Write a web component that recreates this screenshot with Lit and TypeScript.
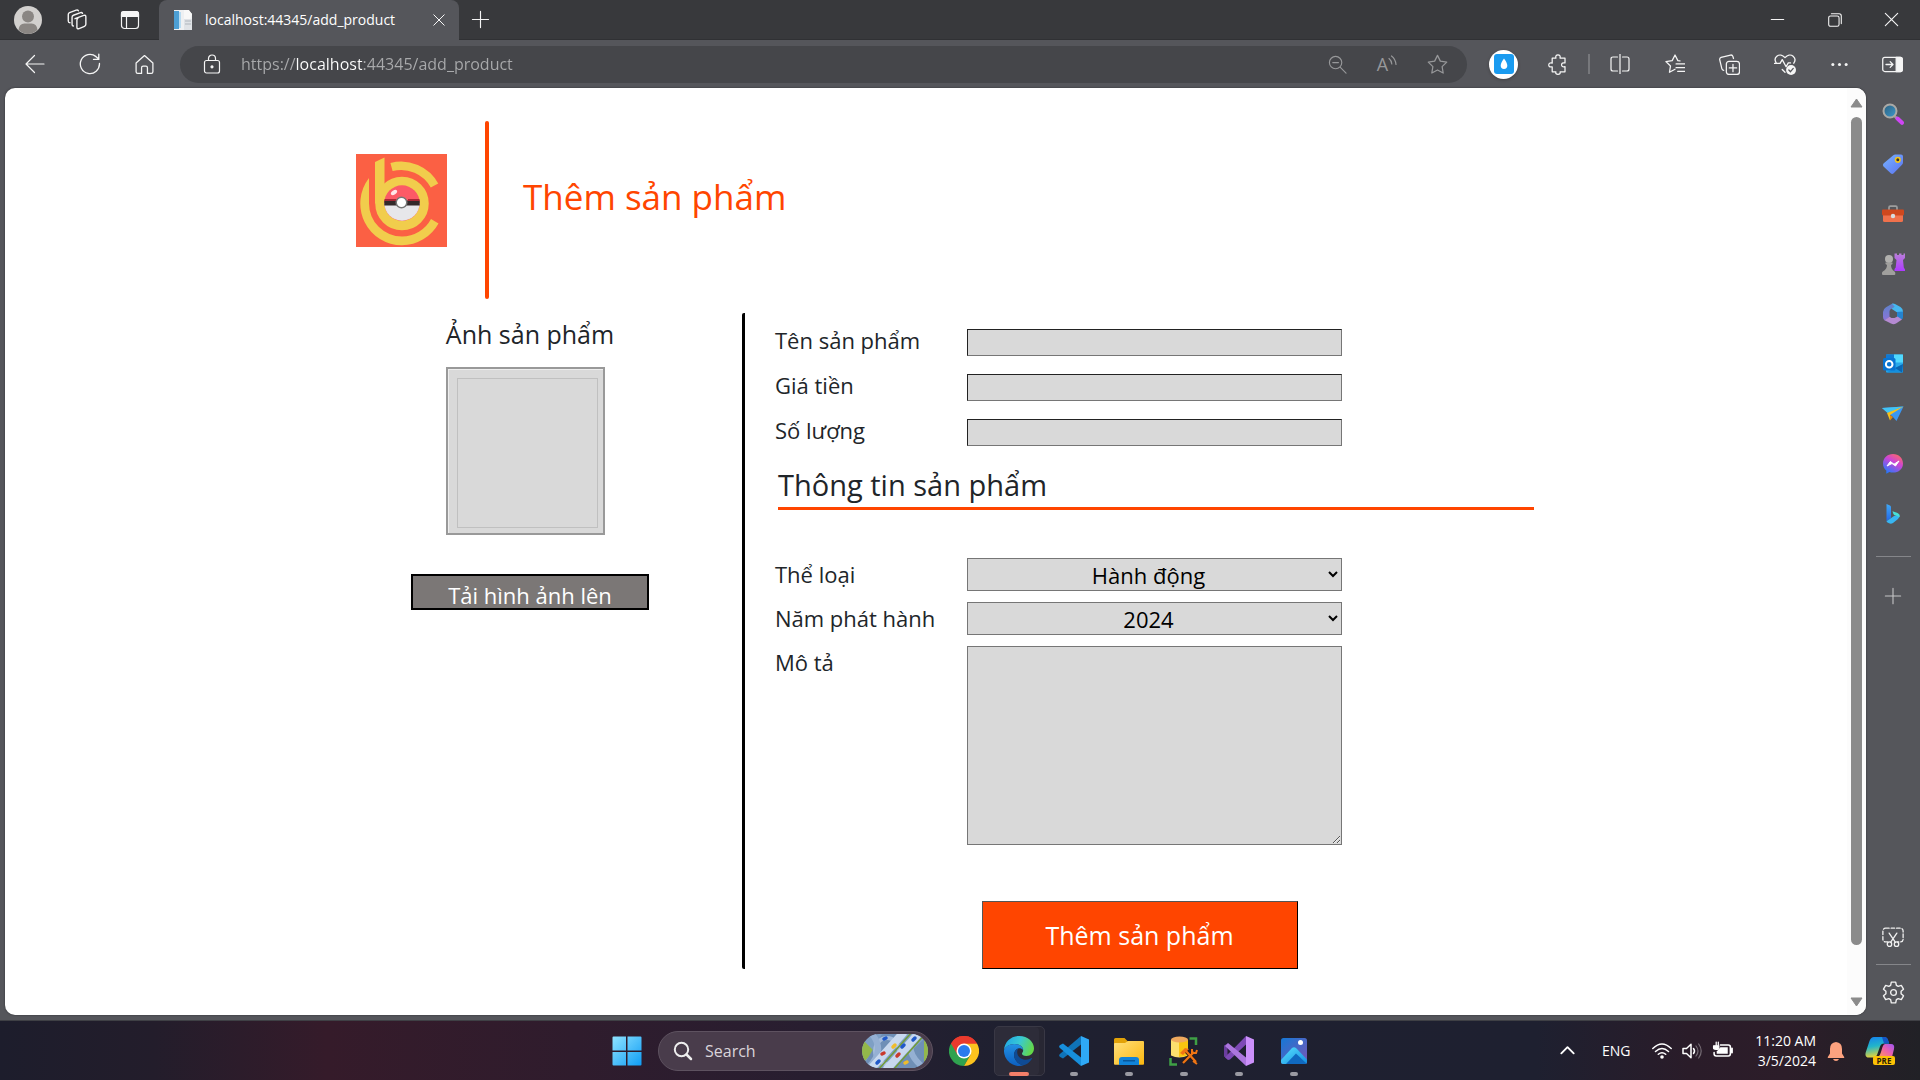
import { LitElement, html, css, svg } from "lit";
import { customElement, property } from "lit/decorators.js";

const line = (size: number, body: unknown) => html`
  <svg class="line" width=${size} height=${size} viewBox="0 0 20 20" aria-hidden="true">${body}</svg>`;
const art = (w: number, h: number, body: unknown) => html`
  <svg width=${w} height=${h} viewBox="0 0 ${w} ${h}" aria-hidden="true">${body}</svg>`;

const glyph = {
  workspaces: svg`<path d="M7 9.3 14.6 6.4q1.8-.5 1.8 1.2v6.6q0 1.2-1.2 1.7l-4.7 2q-1.9.6-1.9-1.2v-6.2q0-1 .9-1.4M5.6 15.6q-1.2 0-1.2-1.3V8q0-1.2 1.2-1.7L11.8 4q1.2-.3 1.7.6M2.6 12.8q-1.5 0-1.5-1.4V5.6q0-1.2 1.1-1.6L8 1.8q1.4-.4 1.9.6"/>`,
  tabs: svg`<rect x="1.5" y="1.5" width="17" height="17" rx="3"/><path d="M1.5 3.5q0-2 2-2h13q2 0 2 2v3h-17z" fill="currentColor"/><path d="M6.5 6v12.500"/>`,
  back: svg`<path d="M19 10H1.500M9.500 1.500 1 10l8.500 8.500"/>`,
  refresh: svg`<path d="M18.600 9.500A8.700 8.700 0 1 1 15.500 3.300L18 5.500M18 1v4.800h-4.800"/>`,
  home: svg`<path d="M2 8.600 10 1.500l8 7.100v8.400q0 1.500-1.500 1.500h-3.700v-5.500q0-1.500-1.500-1.500H8.700q-1.500 0-1.500 1.500v5.500H3.500Q2 18.500 2 17z"/>`,
  lock: svg`<rect x="2.500" y="6.500" width="15" height="12.500" rx="2"/><path d="M6.500 6.500V4.500a3.500 3.500 0 0 1 7 0v2"/><circle cx="10" cy="12.800" r="1" fill="currentColor"/>`,
  zoomOut: svg`<circle cx="8" cy="8" r="6.500"/><path d="M5 8h6M13 13l6 6"/>`,
  star: svg`<path d="m10 1.300 2.700 5.500 6.100.9-4.400 4.300 1 6.100-5.400-2.900-5.400 2.900 1-6.100L1.200 7.700l6.100-.9z"/>`,
  puzzle: svg`<path d="M4 4h3.500C7 1.500 8 .8 9.500.8S12 1.500 11.500 4h4.700v4.500c-2.300-.5-3.300.4-3.300 1.800s1 2.300 3.300 1.800V17h-4.700c.5 1.600-.5 2.300-2 2.300S7 18.600 7.500 17H4v-4.800c-2.400.5-3.300-.4-3.300-1.800s1-2.300 3.300-1.800z"/>`,
  split: svg`<path d="M7.500 3H3Q1 3 1 5v10q0 2 2 2h4.500M10 0v20M12.500 3H17q2 0 2 2v10q0 2-2 2h-4.500"/>`,
  favorites: svg`<path d="m10.500 14.500-5.300 2.900 1-6-4.400-4.200 6-.9 2.700-5.400 2.700 5.400 2 .3M11.500 9.500H20M11.500 13H20M13 16.500h7"/>`,
  collections: svg`<rect x="7" y="7" width="12.500" height="12.500" rx="2.500"/><path d="M13.300 9.800v7M9.800 13.300h7M4.500 15.500q-1.500-.2-1.800-1.600L.7 5.500Q.4 3.700 2 3.200L11 1q1.700-.3 2.200 1.300l.6 2"/>`,
  heart: svg`<path d="M10 17.500 7.500 15M2 9C.6 6.800.8 4.400 2.600 2.900c2.200-1.800 5.200-1.200 7.400 1.300 2.200-2.500 5.200-3.100 7.400-1.300 1.900 1.600 2 4.300.6 6.400M.5 9.500h5l2-3.500 3.500 6.500 2-3.500h2"/><circle cx="15.500" cy="15.500" r="4.500" fill="currentColor" stroke="none"/><path d="m13.500 15.500 1.500 1.500 2.500-3" stroke="#55565b"/>`,
  dots: svg`<g fill="currentColor" stroke="none"><circle cx="3" cy="10" r="1.600"/><circle cx="10" cy="10" r="1.600"/><circle cx="17" cy="10" r="1.600"/></g>`,
  panel: svg`<rect x=".7" y="3.300" width="18.600" height="13.400" rx="2"/><path d="M13.500 3.300h4q1.800 0 1.800 2v9.400q0 2-1.800 2h-4z" fill="currentColor"/><path d="M3.800 10h6.400M7.800 7.300l2.700 2.700-2.700 2.700"/>`,
  plus: svg`<path d="M10 1.500v17M1.500 10h17"/>`,
  close: svg`<path d="m3.500 3.500 13 13M16.500 3.500l-13 13"/>`,
  minimize: svg`<path d="M3.500 10h13"/>`,
  restore: svg`<rect x="3" y="5.500" width="11.500" height="11.500" rx="2"/><path d="M6 3h8.500q2.500 0 2.500 2.500V14"/>`,
  snip: svg`<rect x=".8" y="2" width="18.400" height="12.500" rx="2.500" stroke-dasharray="3.200 1.800"/><path d="M6.500 6.500 12 15M13.500 6.500 8 15" stroke="#55565b" stroke-width="4"/><path d="m6.500 6.500 5.700 8.300M13.500 6.500l-5.700 8.300"/><circle cx="6.800" cy="16.500" r="2"/><circle cx="13.200" cy="16.500" r="2"/>`,
  gear: svg`<path d="M8.100 1h3.800l.6 2.800 1.600.9 2.700-.9 1.900 3.300-2.100 1.900v2l2.100 1.900-1.900 3.300-2.700-.9-1.600.9-.6 2.800H8.100l-.6-2.800-1.600-.9-2.700.9-1.900-3.300L3.400 11V9L1.300 7.100l1.900-3.300 2.700.9 1.600-.9z"/><circle cx="10" cy="10" r="2.500"/>`,
  chevron: svg`<path d="m3.500 13 6.500-6.500 6.500 6.500" stroke-width="2"/>`,
  wifi: svg`<g stroke-width="1.500"><path d="M.8 7.500Q10-1.500 19.200 7.500M3.500 10.500q6.500-6 13 0M6.300 13.300q3.700-3.200 7.400 0"/></g><circle cx="10" cy="16" r="1.800" fill="currentColor" stroke="none"/>`,
  speaker: svg`<path d="M1 7.500h3.500L9 3.300v13.400L4.500 12.500H1z" stroke-width="1.500"/><path d="M11.500 7.500q2 2.500 0 5" stroke-width="1.500"/><path d="M14 5q4 5 0 10M16.700 3q5 7 0 14" opacity=".35"/>`,
  battery: svg`<path d="M8 4.800h7.500q2 0 2 2v6.400q0 2-2 2H4q-2 0-2-2V12" stroke-width="1.500"/><path d="M8 7h7v6H4.500v-2z" fill="currentColor" stroke="none"/><path d="M19 8v4" stroke-width="1.800"/><path d="M4 2v4M1.500 5.500h5v2Q6.500 9 4 9T1.500 7.500zM6 2v3" fill="currentColor"/>`,
};

const magnifier = art(22, 22, svg`
  <defs><linearGradient id="mg" x1="0" y1="0" x2="1" y2="1"><stop stop-color="#2c5e7c"/><stop offset="1" stop-color="#3d9bd0"/></linearGradient></defs>
  <path d="m12.500 13 3 3" stroke="#9b9b9b" stroke-width="2.500"/><path d="m15.500 15.500 4.500 4.300" stroke="#cf45f5" stroke-width="4" stroke-linecap="round"/>
  <circle cx="8" cy="8" r="6.500" fill="url(#mg)" stroke="#aaa9a6" stroke-width="2"/>`);
const tag = art(22, 22, svg`
  <defs><linearGradient id="tg" x1="0" y1="0" x2="1" y2="1"><stop stop-color="#78b4ff"/><stop offset="1" stop-color="#5b72f0"/></linearGradient></defs>
  <path d="M11 2.500q1-1 2.500-1H19q2 0 2 2v6q0 1.300-1 2.300l-8.300 8.500q-1.500 1.300-3 0L1.500 13.500q-1.300-1.500 0-3z" fill="url(#tg)"/>
  <circle cx="15.800" cy="6.800" r="2.300" fill="#333" stroke="#f4c41d" stroke-width="1.600"/>`);
const toolbox = art(24, 22, svg`
  <path d="M8 7V4.500q0-1.300 1.300-1.300h5.400Q16 3.200 16 4.500V7" fill="none" stroke="#9d9d9d" stroke-width="1.700"/>
  <path d="M2 11h20v6.500q0 1.500-1.500 1.500h-17Q2 19 2 17.500z" fill="#f0714c"/><path d="M2 6.500h20q1 0 1 1V11q0 1.500-1.500 1.500h-19Q1 12.500 1 11V7.500q0-1 1-1z" fill="#cf481e"/>
  <circle cx="12" cy="13" r="2.200" fill="#d8dde0"/>`);
const chess = art(24, 24, svg`
  <defs><linearGradient id="rk" x1="0" y1="0" x2="0" y2="1"><stop stop-color="#b87fd8"/><stop offset="1" stop-color="#ae3aff"/></linearGradient></defs>
  <path d="M13.500 1.500H16V3h2V1.500h2.500V3h2V1.500H24v4.500l-2 2 .8 7.500 1.200 2v1.500H13.500V17l1.200-1.500.8-7.500-2-2z" fill="url(#rk)"/>
  <circle cx="8" cy="7" r="4" fill="#b1b0ae"/><path d="M4.500 10.500h7V12l-1.500 1q0 4 3.500 6.500.8.500.8 1.500v1q0 1-1 1H2q-1 0-1-1v-1q0-1 .8-1.500Q6 17 6 13l-1.500-1z" fill="#a09f9d"/>`);
const office = art(22, 22, svg`
  <defs><linearGradient id="o1" x1="0" y1="0" x2="0" y2="1"><stop stop-color="#5c83c9"/><stop offset="1" stop-color="#8b74d8"/></linearGradient></defs>
  <path d="M10.500 0.500 4 4.200Q1 6 1 9v5q0 2 1.800 3.500L7.500 14V8.500q0-1.500 1.500-2.400L13.500 3z" fill="url(#o1)"/>
  <path d="M10 .8q1.500-.6 3 .2L18.500 4Q21 5.500 21 8.500v4L14.500 9 9.500 5.800 12.500 3.500z" fill="#46b7f0"/>
  <path d="M21 8.500V14q0 1.500-1.200 2.600L15 14V9z" fill="#2583cf"/>
  <path d="m2.500 17.200 5-3.500 2 1.300h3l3-1.500 4.500 3-6 4q-2.500 1.500-5 0z" fill="#b58ad2"/>`);
const outlook = art(22, 22, svg`
  <rect x="4" y="1.500" width="17" height="18" rx="1" fill="#28a8ea"/><path d="M12 1.500h9v8h-9z" fill="#50d9ff"/><path d="M4 1.500h8v8H4z" fill="#0f78d4"/>
  <path d="m4 19.500 17-8v7q0 1-1 1z" fill="#1490df"/><path d="m13 15 8-4-1 8.500z" fill="#0a65b1"/>
  <rect x="1" y="5" width="12.500" height="12.500" rx="1.500" fill="#0873d1"/><circle cx="7.200" cy="11.200" r="3.300" fill="none" stroke="#fff" stroke-width="2"/>`);
const plane = art(24, 22, svg`
  <path d="M1 5 22.500 3.500 15.500 18l-4-4.500z" fill="#3a97f3"/><path d="M1 5l21.500-1.500L6.500 10z" fill="#42c4f5"/>
  <path d="M6 10 22.500 3.500 9 12v5.500z" fill="#f8c21c"/><path d="m9 12 3 2-3 3.500z" fill="#e48a0c"/>`);
const messenger = art(22, 22, svg`
  <defs><linearGradient id="ms" x1=".8" y1="0" x2=".2" y2="1"><stop stop-color="#ff6a62"/><stop offset=".4" stop-color="#cc45d6"/><stop offset="1" stop-color="#1a7cff"/></linearGradient></defs>
  <path d="M11 1C5.300 1 1 5 1 10.500c0 3 1.300 5.400 3.300 7v3.200L7.400 19q1.700.6 3.600.6c5.700 0 10-3.800 10-9.200S16.700 1 11 1z" fill="url(#ms)"/>
  <path d="m5 13 3.300-4.500 3.700 2.700L17 8l-3.500 5-3.500-2.500z" fill="#fff" stroke="#fff" stroke-linejoin="round"/>`);
const bing = art(22, 22, svg`
  <defs><linearGradient id="bg1" x1="0" y1="0" x2="0" y2="1"><stop stop-color="#3fa9f5"/><stop offset="1" stop-color="#2466e8"/></linearGradient></defs>
  <path d="m4.500 1 3.500 1.500q1 .5 1 1.500v11l-4.500 3.300z" fill="url(#bg1)"/><path d="M4.500 18.300 12 13l5.500-1.500q.5 2.500-1.500 4.500l-5 4q-2 1.200-4 .3-2.500-1-2.500-2z" fill="#38b6f2"/>
  <path d="m10.500 8.300 4.500 1.500q3 1.200 2.600 4.500-1.500-1.300-4-1.800-1.800-.5-2.200-1.500z" fill="#48e0d5"/>`);

const windowsLogo = art(30, 30, svg`
  <defs><linearGradient id="wn" x1="0" y1="0" x2="1" y2="1"><stop stop-color="#8fe3ff"/><stop offset="1" stop-color="#0f9df5"/></linearGradient></defs>
  <path d="M1.500.5H14V14.500H.5v-13q0-1 1-1zM15.500.5h13q1 0 1 1V14.500h-14zM.5 16H14v13.500H1.500q-1 0-1-1zM15.500 16h14v12.500q0 1-1 1h-13z" fill="url(#wn)"/>`);
const chrome = art(30, 30, svg`
  <path d="M15 15 2 7.500A15 15 0 0 1 28 7.500z" fill="#ea3a2d"/><path d="M2 7.500A15 15 0 0 0 15 30l6.500-11.300L15 15z" fill="#2fa24f"/>
  <path d="M28 7.500A15 15 0 0 1 15 30l6.500-11.200L15 7.500z" fill="#fcc31e"/><path d="M2 7.500A15 15 0 0 1 28 7.500H15v7.500l-6.500 3.700z" fill="#ea3a2d"/>
  <circle cx="15" cy="15" r="7.500" fill="#fff"/><circle cx="15" cy="15" r="6" fill="#2a7bee"/>`);
const edge = art(30, 30, svg`
  <defs>
    <linearGradient id="e1" x1="0" y1=".2" x2="1" y2=".5"><stop stop-color="#1fa5e6"/><stop offset=".5" stop-color="#38c8d4"/><stop offset="1" stop-color="#64d848"/></linearGradient>
    <linearGradient id="e2" x1="0" y1="0" x2="0" y2="1"><stop stop-color="#2391e4"/><stop offset="1" stop-color="#0c5fc0"/></linearGradient>
  </defs>
  <path d="M0 14C.5 6 7 0 15.300 0 24 0 30 6 30 12.300c0 4.800-3.500 7.700-7.500 7.700-3.200 0-4.500-1.300-4.500-2.300 0-.8 1.200-1.500 1.200-3.700C19 10.500 15 8 10.500 8 5.500 8 1.500 10.800 0 14z" fill="url(#e1)"/>
  <path d="M0 14C1.500 10.800 5 8 10.500 8c4.600 0 8.300 2.600 8.700 6-1.500-1.600-3.500-2-5-1.500-4 1.500-5.200 6.500-3.200 10.500 1.700 3.500 5 5.800 8.500 6.200A15 15 0 0 1 0 14z" fill="url(#e2)"/>
  <path d="M14.200 12.500C12 16 13.500 20.500 17 22.500c4 2.200 8 1.200 10-.2.800-.5 1.300 0 .8.800-2 3.400-5.300 5.600-8.300 6.100-5-.7-9.500-5-9.500-10.200 0-3 1.700-5.500 4.200-6.500z" fill="#0f4b94"/>`);
const vscode = art(30, 30, svg`
  <path d="M22 0v8.500L4 22.500 1.200 21q-2-1.500-.3-3z" fill="#0f73b8"/>
  <path d="M22 30v-8.500L4 7.500 1.200 9q-2 1.500-.3 3z" fill="#178fdc"/><path d="M22 0 30 3.500v23L22 30z" fill="#2fa9f6"/>`);
const folder = art(30, 30, svg`
  <defs><linearGradient id="fd" x1="0" y1="0" x2="1" y2="1"><stop stop-color="#ffe07c"/><stop offset="1" stop-color="#fbb70f"/></linearGradient></defs>
  <path d="M0 3.500Q0 2 1.500 2h9L14 5.500h14V12H0z" fill="#e2a208"/><path d="M0 8q0-1 1-1h10l3-2h15q1 0 1 1v22q0 .8-1 .8H1q-1 0-1-.8z" fill="url(#fd)"/>
  <path d="M5 29v-5q0-3 3-3h14q3 0 3 3v5z" fill="#1183d8"/><rect x="9" y="24" width="12" height="1.500" fill="#08579b"/>`);
const database = art(30, 30, svg`
  <path d="M2 4v15.500q8 4 17 0V4z" fill="#fbdf6e"/><path d="M10 4h9v15q-4.500 2-9 2z" fill="#f9c510"/><ellipse cx="10.500" cy="3.500" rx="8.500" ry="3" fill="#efa95e"/>
  <path d="M20.500 2.500h6.500V9M1.500 22v6.500H8" fill="none" stroke="#3fa045" stroke-width="2.500"/>
  <path d="m14 27 11-11M17 15l10 11" stroke="#2a1c1a" stroke-width="4"/><path d="m14 27 11-11M17 15l10 11" stroke="#ef7514" stroke-width="2.200"/>
  <path d="m11 17 5-5 4 1-6 6z" fill="#ef7514"/><path d="M23 13v4h4l1-3M28 28l-4-3" fill="none" stroke="#ef7514" stroke-width="2"/>`);
const studio = art(30, 30, svg`
  <path d="M0 9.500 4 7.500 7 12v6l-3 5-4-2.500z" fill="#6b3d9f"/><path d="M3.500 11.500v7L7.500 15z" fill="#231f30"/>
  <path d="M1 21.500 22 0v8.500L6 23.500l-2 .5z" fill="#7d49b5"/><path d="M4 7 22 21.500V30L1 10z" fill="#ac76de"/><path d="m22 0 8 3.500v23L22 30z" fill="#cb90fa"/>`);
const photos = art(26, 26, svg`
  <defs><linearGradient id="ph" x1="0" y1="0" x2="1" y2="1"><stop stop-color="#1478d6"/><stop offset="1" stop-color="#7b56b5"/></linearGradient>
  <linearGradient id="mt" x1="0" y1="0" x2="1" y2="1"><stop stop-color="#58e2ff"/><stop offset="1" stop-color="#158de0"/></linearGradient></defs>
  <rect width="26" height="26" rx="2.500" fill="url(#ph)"/><path d="M0 22 11 10q2-1.500 4 0l11 11.500V24q0 2-2 2H2q-2 0-2-2z" fill="url(#mt)"/><path d="m5 26 10-10.500 10.500 10q-.7.500-1.500.5z" fill="#1069c0"/><circle cx="19.500" cy="4.500" r="2.500" fill="#fff"/>`);
const roads = art(66, 34, svg`
  <defs><clipPath id="rc"><rect width="66" height="34" rx="17"/></clipPath></defs>
  <g clip-path="url(#rc)"><rect width="66" height="34" fill="#7e9fc4"/><path d="M0 5 12 17 0 30zM66 3 51 16l15 16z" fill="#93b84a"/>
  <path d="M20 0h17L10 34H0zM62 5 32 34h30z" fill="#6f8fb6"/>
  <g fill="none"><ellipse cx="25" cy="17" rx="12" ry="13" stroke="#a5bcdb" stroke-width="4"/><path d="M10 0q14 17-4 34M54 0q-14 17 8 34" stroke="#95b0d3" stroke-width="6"/>
  <path d="m8 36 34-38M24 36 58-2" stroke="#c8d8ee" stroke-width="8"/><path d="m16 36 34-38M31 36 65-2" stroke="#739c36" stroke-width="1.500"/></g>
  <g stroke-linecap="round" stroke-width="3.500"><path d="m22 5 2-1M51 6l2-2M40 13l2-2M15 29l2-2" stroke="#2159c9"/><path d="m20 20 2-1M35 22l2-2" stroke="#c93a2d"/><path d="m31 13 2-2M43 29l2-1" stroke="#f0bc2b"/></g></g>`);
const copilot = art(32, 30, svg`
  <defs>
    <linearGradient id="c1" x1="0" y1="0" x2=".2" y2="1"><stop stop-color="#1580f0"/><stop offset=".5" stop-color="#22b5c9"/><stop offset="1" stop-color="#e2d23c"/></linearGradient>
    <linearGradient id="c2" x1="1" y1="0" x2="0" y2="1"><stop stop-color="#9d55f5"/><stop offset=".5" stop-color="#ef62a8"/><stop offset="1" stop-color="#ff9d51"/></linearGradient>
  </defs>
  <path d="M9 1h10q3 0 4 3.500l1 3h-5q-3 0-4 3L12 19q-1 2.500-4 2.500H4q-4.500 0-3.300-5L4.500 5Q6 1 9 1z" fill="url(#c1)"/>
  <path d="M17 1h3q2.500 0 3.300 3.500l1 3H19z" fill="#1556c4"/><path d="M20 8h6q4 0 3 5l-2 8H13q2-1 3-5l1.500-5Q18.500 8 20 8z" fill="url(#c2)"/>
  <rect x="8" y="20" width="22" height="9" rx="2" fill="#fdc205"/><text x="19" y="27.500" text-anchor="middle" font-size="8" font-weight="700" font-family="Open Sans, sans-serif" fill="#2b1d08">PRE</text>`);
const bell = art(18, 20, svg`<path d="M9 1Q3 1.500 3 8v4.500L.8 16v1h16.400v-1L15 12.500V8q0-6.500-6-7zM6 18h6q-.8 2-3 2t-3-2z" fill="#fda27f"/>`);
const brand = svg`
  <rect width="91" height="93" fill="#fb6044"/>
  <path d="M19 8 28.500 3.500V40L19 50z" fill="#f1cd4c"/>
  <circle cx="46" cy="49.500" r="22" fill="none" stroke="#f1cd4c" stroke-width="9.500"/>
  <path d="M35.500 13A38 38 0 0 1 78.500 31.500" fill="none" stroke="#f1cd4c" stroke-width="8.500"/>
  <path d="M13 24A41.700 41.700 0 0 0 46 91.200 41.700 41.700 0 0 0 82.500 69.500L75 65A33 33 0 0 1 46 82.500 33 33 0 0 1 13 49.500z" fill="#f1cd4c"/>
  <circle cx="46" cy="49" r="17.700" fill="#fc5a66"/><path d="M28.300 49a17.700 17.700 0 0 0 35.400 0z" fill="#e7e7ea"/>
  <path d="M28.300 46.500h35.400v5H28.300z" fill="#33292a"/><path d="M28.500 45h12v2h-12zM52 45h11.500v2H52z" fill="#a72836"/>
  <circle cx="45.500" cy="48.500" r="5.300" fill="#fff" stroke="#777" stroke-width="1.500"/><ellipse cx="38" cy="38.500" rx="3.500" ry="2" transform="rotate(-35 38 38.500)" fill="#ffe6e8"/>`;

const reset = css`
  * { box-sizing: border-box; }
  :host { font-family: "Open Sans", "Noto Sans", sans-serif; }
  button { font: inherit; color: inherit; background: none; border: 0; padding: 0; display: flex; align-items: center; justify-content: center; flex: none; }
  svg { display: block; flex: none; }
  .line { fill: none; stroke: currentColor; stroke-width: 1.200; stroke-linecap: round; stroke-linejoin: round; }
`;

@customElement("browser-chrome")
class BrowserChrome extends LitElement {
  static styles = [reset, css`
    :host { display: block; color: #f5f5f5; background: #55565b; }
    .strip { display: flex; height: 40px; background: #38393c; border-bottom: 1px solid #303134; }
    .strip-btn { width: 51px; }
    .lead { padding-left: 2px; display: flex; }
    .tab { display: flex; align-items: center; width: 300px; height: 40px; margin-left: 4px; padding: 0 10px 0 14px; border-radius: 8px 8px 0 0; background: #55565b; font-size: 14px; color: #fff; }
    .tab-title { flex: 1; margin-left: 12px; padding-bottom: 1px; }
    .tab-close { width: 20px; height: 24px; }
    .new-tab { width: 42px; }
    .window { display: flex; margin-left: auto; }
    .win-btn { width: 57px; }
    .bar { display: flex; align-items: center; height: 48px; padding: 0 3px 0 7px; }
    .nav { width: 55px; height: 40px; }
    .address { display: flex; align-items: center; flex: 1; min-width: 0; height: 37px; margin: 0 9px 0 8px; padding: 0 5px 0 12px; border-radius: 19px; background: #45464a; }
    .site { width: 40px; }
    .url { flex: 1; min-width: 0; margin: 0 0 0 9px; padding: 0; border: 0; outline: 0; font: 16px "Open Sans", "Noto Sans", sans-serif; color: transparent; background: linear-gradient(90deg, #a9aaac 55px, #fff 55px, #fff 121px, #a9aaac 121px); -webkit-background-clip: text; background-clip: text; }
    .dim { width: 50px; color: #97989a; }
    .read { font-size: 18px; line-height: 26px; }
    .waves { align-self: center; margin-bottom: 8px; }
    .profile { width: 29px; height: 29px; border-radius: 50%; background: #fff; display: flex; align-items: center; justify-content: center; box-shadow: 0 1px 3px #2226; }
    .rule { width: 2px; height: 20px; margin: 0 2px; background: #77787c; }
    .side { width: 50px; height: 40px; }
  `];

  render() {
    return html`
      <div class="strip">
        <div class="lead">
          <button class="strip-btn" aria-label="Profile">${art(28, 28, svg`<circle cx="14" cy="14" r="14" fill="#d2d0ce"/><circle cx="14" cy="10.500" r="6" fill="#8a8683"/><path d="M4.500 24q.5-6.500 6-6.500h7q5.500 0 6 6.500-9.500 8-19 0z" fill="#8a8683"/>`)}</button>
          <button class="strip-btn" aria-label="Workspaces">${line(23, glyph.workspaces)}</button>
          <button class="strip-btn" aria-label="Tab actions">${line(20, glyph.tabs)}</button>
        </div>
        <div class="tab">
          ${art(20, 22, svg`<path d="M1 1h14l4 4v16H1z" fill="#eef0f2"/><path d="M1 2h5v18H1z" fill="#4d9fd4"/><path d="M6 3h2v16H6z" fill="#b9dcf2"/><path d="M11 1h5l3 4-2 5h-6z" fill="#f8f8f8"/><path d="M11 10h8v11h-8z" fill="#dfe2e6"/><path d="M12 12h6M12 15h6" stroke="#aeb5bc"/>`)}
          <span class="tab-title">localhost:44345/add_product</span>
          <button class="tab-close" aria-label="Close tab">${line(16, glyph.close)}</button>
        </div>
        <button class="new-tab" aria-label="New tab">${line(19, glyph.plus)}</button>
        <div class="window">
          <button class="win-btn" aria-label="Minimize">${line(19, glyph.minimize)}</button>
          <button class="win-btn" aria-label="Restore">${line(18, glyph.restore)}</button>
          <button class="win-btn" aria-label="Close window">${line(19, glyph.close)}</button>
        </div>
      </div>
      <div class="bar">
        <button class="nav" aria-label="Back">${line(20, glyph.back)}</button>
        <button class="nav" aria-label="Refresh">${line(22, glyph.refresh)}</button>
        <button class="nav" aria-label="Home">${line(21, glyph.home)}</button>
        <div class="address">
          <button class="site" aria-label="Site information">${line(20, glyph.lock)}</button>
          <input class="url" type="text" aria-label="Address" spellcheck="false" .value=${"https://localhost:44345/add_product"}>
          <button class="dim" aria-label="Zoom out">${line(19, glyph.zoomOut)}</button>
          <button class="dim" aria-label="Read aloud"><span class="read">A</span><svg class="line waves" width="9" height="11" viewBox="0 0 9 11"><path d="M1 3.500q2.500 2 2.800 5.500M3.500 1q4 3 4.500 8.500"/></svg></button>
          <button class="dim" aria-label="Add to favorites">${line(21, glyph.star)}</button>
        </div>
        <button class="nav" aria-label="Extension"><span class="profile">${art(20, 20, svg`<rect width="20" height="20" rx="3" fill="#1a9bf0"/><path d="M10 4.500q3.300 4.500 3.300 7a3.300 3.500 0 0 1-6.600 0q0-2.500 3.300-7z" fill="#fff"/>`)}</span></button>
        <button class="nav" aria-label="Extensions">${line(21, glyph.puzzle)}</button>
        <span class="rule"></span>
        <button class="nav" aria-label="Split screen">${line(20, glyph.split)}</button>
        <button class="nav" aria-label="Favorites">${line(21, glyph.favorites)}</button>
        <button class="nav" aria-label="Collections">${line(21, glyph.collections)}</button>
        <button class="nav" aria-label="Browser essentials">${line(22, glyph.heart)}</button>
        <button class="nav" aria-label="Settings and more">${line(19, glyph.dots)}</button>
        <button class="side" aria-label="Sidebar">${line(21, glyph.panel)}</button>
      </div>`;
  }
}

@customElement("browser-sidebar")
class BrowserSidebar extends LitElement {
  static styles = [reset, css`
    :host { display: flex; flex-direction: column; align-items: center; width: 54px; padding-top: 1px; color: #f0f0f0; }
    .app { width: 40px; height: 50px; }
    .apps { display: flex; flex-direction: column; align-items: center; margin-bottom: 17px; }
    .rule { width: 35px; height: 1px; flex: none; background: #85868a; }
    .add { width: 40px; height: 40px; margin: 19px 0 auto; color: #c6c6c8; }
    .snip { width: 40px; height: 55px; }
    .gear { width: 40px; height: 46px; margin-top: 4px; }
    .foot { display: flex; flex-direction: column; align-items: center; }
  `];
  render() {
    const apps: [string, unknown][] = [
      ["Search", magnifier], ["Shopping", tag], ["Tools", toolbox], ["Games", chess], ["Microsoft 365", office],
      ["Outlook", outlook], ["Drop", plane], ["Messenger", messenger], ["Bing", bing],
    ];
    return html`
      <nav class="apps" aria-label="Apps">${apps.map(([name, icon]) => html`<button class="app" aria-label=${name}>${icon}</button>`)}</nav>
      <span class="rule"></span>
      <button class="add" aria-label="Customize">${line(18, glyph.plus)}</button>
      <div class="foot">
        <button class="snip" aria-label="Screenshot">${line(22, glyph.snip)}</button>
        <span class="rule"></span>
        <button class="gear" aria-label="Settings">${line(23, glyph.gear)}</button>
      </div>`;
  }
}

@customElement("product-form")
class ProductForm extends LitElement {
  static styles = [reset, css`
    :host { display: block; color: #212529; padding: 33px 313px 40px 351px; }
    h1, h2, h3 { margin: 0; font-weight: 400; }
    .head { display: flex; align-items: flex-start; min-height: 178px; }
    .logo { margin: 33px 38px 0 0; }
    .bar { align-self: stretch; width: 4px; border-radius: 2px; background: #ff4500; margin-right: 34px; }
    .title { margin-top: 52px; font-size: 35px; line-height: 48px; color: #ff4500; }
    .body { display: grid; grid-template-columns: 386px minmax(0, 1fr); margin-top: 14px; }
    .media { display: flex; flex-direction: column; align-items: center; padding-right: 38px; }
    .media-title { font-size: 25px; line-height: 34px; margin: 4px 0 16px; }
    .frame { width: 159px; height: 168px; padding: 9px; background: #d9d9d9; border: 2px solid #999; box-shadow: inset 1px 1px #eee; }
    .preview { height: 150px; width: 141px; border: 1px solid #c0c0c0; }
    .upload { width: 238px; height: 36px; margin-top: 39px; padding-top: 6px; background: #7b7776; border: 2px solid #000; color: #fff; font-size: 22px; line-height: 28px; }
    .details { border-left: 3px solid #000; padding: 16px 0 0 30px; border-radius: 2px 0 0 2px; }
    .grid { display: grid; grid-template-columns: 192px minmax(0, 375px); font-size: 22px; align-items: start; }
    .basic { row-gap: 18px; line-height: 22px; }
    .more { row-gap: 11px; line-height: 33px; }
    input, select, textarea { display: block; width: 100%; margin: 0; border-radius: 0; background: #d9d9d9; color: #000; font: inherit; outline: 0; }
    input { height: 27px; padding: 0 4px; border: 1px solid; border-color: #222 #767676 #767676 #222; }
    select { height: 33px; padding: 0; border: 1px solid #767676; text-align: center; line-height: 28px; }
    textarea { height: 199px; padding: 4px; border: 1px solid #767676; resize: both; }
    .section { margin: 20px 0 48px 3px; padding-bottom: 3px; border-bottom: 3px solid #ff4500; font-size: 29px; line-height: 38px; }
    .actions { display: flex; justify-content: center; margin-top: 56px; padding-right: 30px; }
    .submit { width: 316px; height: 68px; background: #ff4500; border: 1px solid; border-color: #555 #000 #000 #555; color: #fff; font-size: 25px; }
  `];
  render() {
    return html`
      <header class="head">
        <svg class="logo" width="91" height="93" viewBox="0 0 91 93" role="img" aria-label="Logo">${brand}</svg>
        <span class="bar"></span>
        <h1 class="title">Thêm sản phẩm</h1>
      </header>
      <div class="body">
        <section class="media">
          <div>
            <h3 class="media-title">Ảnh sản phẩm</h3>
            <div class="frame"><div class="preview"></div></div>
          </div>
          <button class="upload" type="button">Tải hình ảnh lên</button>
        </section>
        <form class="details" @submit=${(e: Event) => e.preventDefault()}>
          <div class="grid basic">
            <label for="name">Tên sản phẩm</label><input id="name" type="text">
            <label for="price">Giá tiền</label><input id="price" type="text">
            <label for="amount">Số lượng</label><input id="amount" type="text">
          </div>
          <h2 class="section">Thông tin sản phẩm</h2>
          <div class="grid more">
            <label for="genre">Thể loại</label><select id="genre"><option>Hành động</option></select>
            <label for="year">Năm phát hành</label><select id="year"><option>2024</option></select>
            <label for="about">Mô tả</label><textarea id="about"></textarea>
          </div>
          <div class="actions"><button class="submit" type="submit">Thêm sản phẩm</button></div>
        </form>
      </div>`;
  }
}

@customElement("task-bar")
class TaskBar extends LitElement {
  @property() time = "11:20 AM";
  @property() date = "3/5/2024";
  static styles = [reset, css`
    :host { display: grid; grid-template-columns: 1fr auto 1fr; align-items: center; height: 60px; color: #fff; font-size: 14px; border-top: 1px solid #3f4045;
      background: linear-gradient(90deg, #1d1d2c 0%, #231d2b 8%, #351b2a 17%, #2f1c2d 30%, #281e30 42%, #1f2030 52%, #1e2030 80%, #2a1c29 88%, #2c1d29 93%, #212126 100%); box-sizing: border-box; }
    .center { grid-column: 2; display: flex; align-items: center; height: 59px; }
    .app { width: 55px; height: 50px; position: relative; }
    .search { display: flex; align-items: center; width: 275px; height: 40px; margin: 0 3px 0 4px; padding: 0 4px 0 14px; border-radius: 20px; background: #493c4b; border: 1px solid #5e5260; color: #e3dfe4; }
    .query { flex: 1; min-width: 0; margin: 0 0 0 12px; padding: 0; border: 0; outline: 0; background: none; font: 16px "Open Sans", "Noto Sans", sans-serif; }
    .query::placeholder { color: #d9d4da; }
    .dot { position: absolute; left: 50%; bottom: 0; width: 8px; height: 4px; margin-left: -4px; border-radius: 2px; background: #9a9aa2; }
    .active::before { content: ""; position: absolute; z-index: -1; inset: 0 1px 0 3px; border-radius: 5px; background: #2d2c39; border: 1px solid #393845; box-shadow: inset -5px 0 #282733; }
    .active { z-index: 0; }
    .active .dot { width: 20px; margin-left: -10px; background: #f37f69; }
    .tray { grid-column: 3; display: flex; align-items: center; justify-content: flex-end; padding-right: 12px; }
    .more { width: 40px; }
    .lang { width: 58px; margin-right: 2px; }
    .status { width: 30px; }
    .clock { display: block; margin: 0 5px 0 18px; text-align: right; line-height: 20px; }
    .bell { width: 30px; }
    .assist { width: 55px; margin-left: 2px; }
  `];
  render() {
    const apps: [string, unknown][] = [["Edge", edge], ["Visual Studio Code", vscode], ["File Explorer", folder], ["SQL Server", database], ["Visual Studio", studio], ["Photos", photos]];
    return html`
      <div class="center">
        <button class="app" aria-label="Start">${windowsLogo}</button>
        <div class="search">
          ${art(20, 20, svg`<circle cx="8.500" cy="8.500" r="6.700" fill="none" stroke="#eee" stroke-width="2"/><path d="m13.500 13.500 4.500 4.500" stroke="#eee" stroke-width="2.500" stroke-linecap="round"/>`)}
          <input class="query" type="search" placeholder="Search" aria-label="Search">
          ${roads}
        </div>
        <button class="app" aria-label="Chrome">${chrome}</button>
        ${apps.map(([name, icon], i) => html`<button class="app ${i ? "" : "active"}" aria-label=${name}>${icon}<span class="dot"></span></button>`)}
      </div>
      <div class="tray">
        <button class="more" aria-label="Hidden icons">${line(19, glyph.chevron)}</button>
        <button class="lang">ENG</button>
        <button class="status" aria-label="Network">${line(20, glyph.wifi)}</button>
        <button class="status" aria-label="Volume">${line(20, glyph.speaker)}</button>
        <button class="status" aria-label="Battery">${line(21, glyph.battery)}</button>
        <button class="clock"><div>${this.time}</div><div>${this.date}</div></button>
        <button class="bell" aria-label="Notifications">${bell}</button>
        <button class="assist" aria-label="Copilot">${copilot}</button>
      </div>`;
  }
}

@customElement("app-root")
class AppRoot extends LitElement {
  static styles = css`
    :host { display: flex; flex-direction: column; min-height: 100vh; background: #55565b; }
    .main { display: flex; flex: 1; padding: 0 0 5px 5px; }
    .page { display: flex; flex: 1; min-width: 0; border-radius: 10px; overflow: hidden; background: #fff; box-shadow: 0 0 2px #2a2b2e; }
    product-form { flex: 1; min-width: 0; }
    .scroll { display: flex; flex-direction: column; align-items: center; gap: 9px; width: 19px; padding: 10px 0 8px; background: #fcfcfc; }
    .thumb { flex: 1; width: 11px; border-radius: 6px; background: #8b8b8b; margin-bottom: 43px; }
    svg { display: block; }
  `;
  render() {
    return html`
      <browser-chrome></browser-chrome>
      <div class="main">
        <main class="page">
          <product-form></product-form>
          <div class="scroll" aria-hidden="true">
            <svg width="13" height="10" viewBox="0 0 13 10"><path d="M6.500 1 12 9H1z" fill="#8b8b8b" stroke="#8b8b8b" stroke-linejoin="round"/></svg>
            <span class="thumb"></span>
            <svg width="13" height="10" viewBox="0 0 13 10"><path d="M6.500 9 12 1H1z" fill="#8b8b8b" stroke="#8b8b8b" stroke-linejoin="round"/></svg>
          </div>
        </main>
        <browser-sidebar></browser-sidebar>
      </div>
      <task-bar></task-bar>`;
  }
}
